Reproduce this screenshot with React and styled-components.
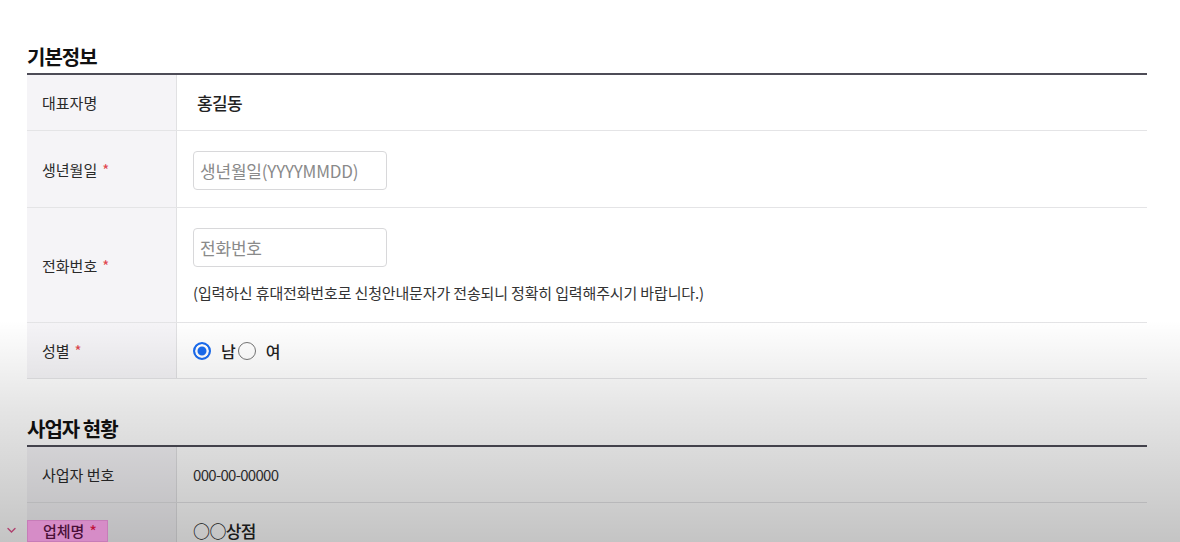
import styled, { createGlobalStyle, css } from 'styled-components';

const GlobalStyle = createGlobalStyle`
	html, body {
		margin: 0;
		padding: 0;
		background: #fff;
	}
	body {
		font-family: 'Noto Sans CJK KR', 'Noto Sans', sans-serif;
		color: #333;
		overflow: hidden;
	}
	* {
		box-sizing: border-box;
	}
`;

const App = () => {
	return (
		<Page>
			<GlobalStyle />
			<Section>
				<SectionTitle>기본정보</SectionTitle>
				<Table>
					<Row>
						<Label>대표자명</Label>
						<Value $pad='0 20px'>
							<StrongText>홍길동</StrongText>
						</Value>
					</Row>
					<Row>
						<Label>
							생년월일<Required>*</Required>
						</Label>
						<Value $pad='20px 16px 17px'>
							<Input placeholder='생년월일(YYYYMMDD)' />
						</Value>
					</Row>
					<Row>
						<Label>
							전화번호<Required>*</Required>
						</Label>
						<Value $pad='20px 16px 19px' $column>
							<Input placeholder='전화번호' />
							<Help>
								(입력하신 휴대전화번호로 신청안내문자가 전송되니 정확히
								입력해주시기 바랍니다.)
							</Help>
						</Value>
					</Row>
					<Row>
						<Label>
							성별<Required>*</Required>
						</Label>
						<Value $pad='0 16px'>
							<RadioGroup>
								<RadioOption>
									<Radio type='radio' name='gender' defaultChecked />
									<RadioText>남</RadioText>
								</RadioOption>
								<RadioOption>
									<Radio type='radio' name='gender' />
									<RadioText>여</RadioText>
								</RadioOption>
							</RadioGroup>
						</Value>
					</Row>
				</Table>
			</Section>

			<Section $spaced>
				<SectionTitle>사업자 현황</SectionTitle>
				<Table>
					<Row>
						<Label>사업자 번호</Label>
						<Value $pad='0 16px'>
							<NumberText>000-00-00000</NumberText>
						</Value>
					</Row>
					<Row>
						<Label $flush>
							<Highlight>
								업체명<Required $dark>*</Required>
							</Highlight>
						</Label>
						<Value $pad='0 16px'>
							<StrongText>○○상점</StrongText>
						</Value>
					</Row>
				</Table>
			</Section>

			<Shade />
			<Marker>
				<svg width='9' height='7' viewBox='0 0 9 7'>
					<path
						d='M1 1.5 L4.5 5 L8 1.5'
						fill='none'
						stroke='#b0406e'
						strokeWidth='1.4'
						strokeLinecap='round'
					/>
				</svg>
			</Marker>
		</Page>
	);
};

const Page = styled.div`
	position: relative;
	width: 1180px;
	height: 542px;
	padding: 43px 33px 0 27px;
	overflow: hidden;
`;

const Section = styled.section`
	margin-top: ${(p) => (p.$spaced ? '36px' : '0')};
`;

const SectionTitle = styled.h2`
	margin: 0;
	padding-bottom: 2px;
	font-size: 20px;
	line-height: 28px;
	font-weight: 700;
	letter-spacing: -1px;
	color: #111;
	border-bottom: 2px solid #4d4c57;
`;

const Table = styled.div`
	display: flex;
	flex-direction: column;
`;

const Row = styled.div`
	display: grid;
	grid-template-columns: 150px 1fr;
	min-height: 56px;
	border-bottom: 1px solid #e4e4e6;
`;

const Label = styled.div`
	display: flex;
	align-items: center;
	padding-left: ${(p) => (p.$flush ? '0' : '15px')};
	background: #f5f4f7;
	border-right: 1px solid #e1e1e3;
	font-size: 15px;
	color: #2a2a2a;
`;

const Required = styled.span`
	margin-left: 5px;
	color: ${(p) => (p.$dark ? '#c0143c' : '#e0464e')};
	font-size: 15px;
`;

const Highlight = styled.span`
	position: relative;
	z-index: 3;
	display: inline-flex;
	align-items: center;
	height: 22px;
	padding: 0 10px 0 15px;
	background: #d68cc7;
	border: 1px solid #c77cb8;
	color: #4a1038;
	font-weight: 500;
`;

const Value = styled.div`
	display: flex;
	flex-direction: ${(p) => (p.$column ? 'column' : 'row')};
	align-items: ${(p) => (p.$column ? 'flex-start' : 'center')};
	padding: ${(p) => p.$pad};
	gap: 16px;
`;

const StrongText = styled.span`
	font-size: 17px;
	font-weight: 500;
	letter-spacing: -0.6px;
	color: #222;
`;

const NumberText = styled.span`
	font-size: 15px;
	letter-spacing: -0.7px;
	color: #333;
`;

const Input = styled.input`
	width: 194px;
	height: 39px;
	padding: 0 6px;
	border: 1px solid #d8d8da;
	border-radius: 4px;
	font-family: inherit;
	font-size: 17px;
	letter-spacing: -0.2px;
	color: #333;
	outline: none;
	&::placeholder {
		color: #8a8a8a;
	}
`;

const Help = styled.p`
	margin: 0;
	font-size: 15px;
	line-height: 20px;
	letter-spacing: -0.15px;
	color: #333;
`;

const RadioGroup = styled.div`
	display: flex;
	align-items: center;
	gap: 2px;
`;

const RadioOption = styled.label`
	display: flex;
	align-items: center;
	gap: 10px;
`;

const Radio = styled.input`
	appearance: none;
	margin: 0;
	width: 18px;
	height: 18px;
	border-radius: 50%;
	border: 1px solid #767676;
	background: #fff;
	${(p) =>
		p.defaultChecked &&
		css`
			border: 2px solid #1a6cf0;
			background: #1a6cf0;
			box-shadow: inset 0 0 0 2.5px #fff;
		`}
`;

const RadioText = styled.span`
	font-size: 16px;
	font-weight: 500;
	color: #222;
`;

const Shade = styled.div`
	position: absolute;
	left: 0;
	right: 0;
	bottom: 0;
	height: 222px;
	z-index: 2;
	pointer-events: none;
	background: linear-gradient(
		to bottom,
		rgba(0, 0, 0, 0) 0%,
		rgba(0, 0, 0, 0.1) 40%,
		rgba(0, 0, 0, 0.23) 100%
	);
`;

const Marker = styled.span`
	position: absolute;
	left: 7px;
	top: 527px;
	z-index: 3;
	display: flex;
`;

export default App;
